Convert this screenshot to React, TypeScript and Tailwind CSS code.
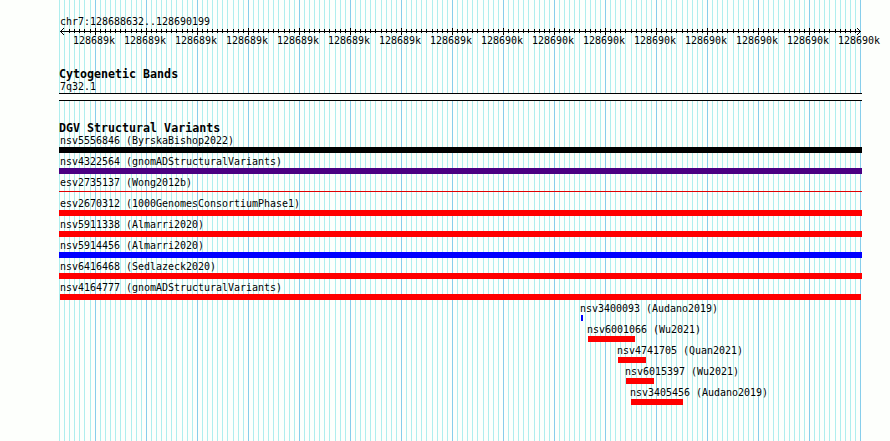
import clsx from "clsx";

type Variant = {
  label: string;
  left: number;
  width: number;
  color: string;
  thin?: boolean;
};

const FULL = 803;

const variants: Variant[] = [
  { label: "nsv5556846 (ByrskaBishop2022)", left: 0, width: FULL, color: "bg-black" },
  { label: "nsv4322564 (gnomADStructuralVariants)", left: 0, width: FULL, color: "bg-[#4b0082]" },
  { label: "esv2735137 (Wong2012b)", left: 0, width: FULL, color: "bg-[#e00000]", thin: true },
  { label: "esv2670312 (1000GenomesConsortiumPhase1)", left: 0, width: FULL, color: "bg-[#ff0000]" },
  { label: "nsv5911338 (Almarri2020)", left: 0, width: FULL, color: "bg-[#ff0000]" },
  { label: "nsv5914456 (Almarri2020)", left: 0, width: FULL, color: "bg-[#0000ff]" },
  { label: "nsv6416468 (Sedlazeck2020)", left: 0, width: FULL, color: "bg-[#ff0000]" },
  { label: "nsv4164777 (gnomADStructuralVariants)", left: 1, width: 801, color: "bg-[#ff0000]" },
  { label: "nsv3400093 (Audano2019)", left: 522, width: 2, color: "bg-[#0000ff]" },
  { label: "nsv6001066 (Wu2021)", left: 529, width: 47, color: "bg-[#ff0000]" },
  { label: "nsv4741705 (Quan2021)", left: 559, width: 28, color: "bg-[#ff0000]" },
  { label: "nsv6015397 (Wu2021)", left: 567, width: 28, color: "bg-[#ff0000]" },
  { label: "nsv3405456 (Audano2019)", left: 572, width: 52, color: "bg-[#ff0000]" },
];

// One line every 10 bp, a darker one every 100 bp
const lines = Array.from({ length: 158 }, (_, i) => ({
  x: Math.floor((i < 7 ? 36.19 : 36.29) + (i - 7) * 5.102),
  major: i % 10 === 7,
}));
const majors = lines.filter((line) => line.major);

function Grid() {
  return (
    <svg className="absolute inset-0" width={FULL} height={441} shapeRendering="crispEdges">
      {lines.map(({ x, major }) => (
        <rect key={x} x={x} y={0} width={1} height={441} fill={major ? "#87ceeb" : "#afeeee"} />
      ))}
    </svg>
  );
}

function Ruler() {
  return (
    <div className="relative h-[29px]">
      <svg className="block" width={FULL} height={9} shapeRendering="crispEdges">
        <rect x={1} y={4} width={801} height={1} />
        {lines.slice(2, -1).map(({ x, major }) => (
          <rect key={x} x={x} y={major ? 1 : 2} width={1} height={major ? 7 : 4} />
        ))}
        {[1, 2, 3].map((d) => (
          <g key={d}>
            <rect x={1 + d} y={4 - d} width={1} height={1} />
            <rect x={1 + d} y={4 + d} width={1} height={1} />
            <rect x={801 - d} y={4 - d} width={1} height={1} />
            <rect x={801 - d} y={4 + d} width={1} height={1} />
          </g>
        ))}
      </svg>
      {majors.map(({ x }, i) => (
        <span
          key={x}
          className="absolute top-[7px] whitespace-pre leading-[13px]"
          style={{ left: x - 22 }}
        >
          {i < 8 ? "128689k" : "128690k"}
        </span>
      ))}
    </div>
  );
}

function Heading({ children }: { children: string }) {
  return <h2 className="h-3 text-[11.65px] leading-3 font-bold">{children}</h2>;
}

function Track({ label, left, width, color, thin }: Variant) {
  return (
    <div className="h-[21px]" style={{ paddingLeft: left }}>
      <div className={clsx("h-[13px] leading-[13px] whitespace-pre", left === 0 && "pl-px", left > 1 && "-ml-px")}>
        {label}
      </div>
      <div className={clsx(color, thin ? "mt-[2px] h-px" : "h-1.5")} style={{ width }} />
    </div>
  );
}

export default function App() {
  return (
    <main className="h-[441px] w-[890px] overflow-hidden bg-[#fdfffc] pl-[59px] font-['DejaVu_Sans_Mono',monospace] text-[9.97px] text-black">
      <div className="relative h-full w-[803px]">
        <Grid />
        <div className="relative pt-[15px]">
          <div className="h-3 pl-px leading-[13px]">chr7:128688632..128690199</div>
          <Ruler />
          <section className="mt-3">
            <Heading>Cytogenetic Bands</Heading>
            <div className="h-[13px] pl-px leading-[13px]">7q32.1</div>
            <div className="h-2 border-y border-black bg-[#fdfffc]" />
          </section>
          <section className="mt-[21px]">
            <Heading>DGV Structural Variants</Heading>
            <div>
              {variants.map((variant) => (
                <Track key={variant.label + variant.color} {...variant} />
              ))}
            </div>
          </section>
        </div>
      </div>
    </main>
  );
}
